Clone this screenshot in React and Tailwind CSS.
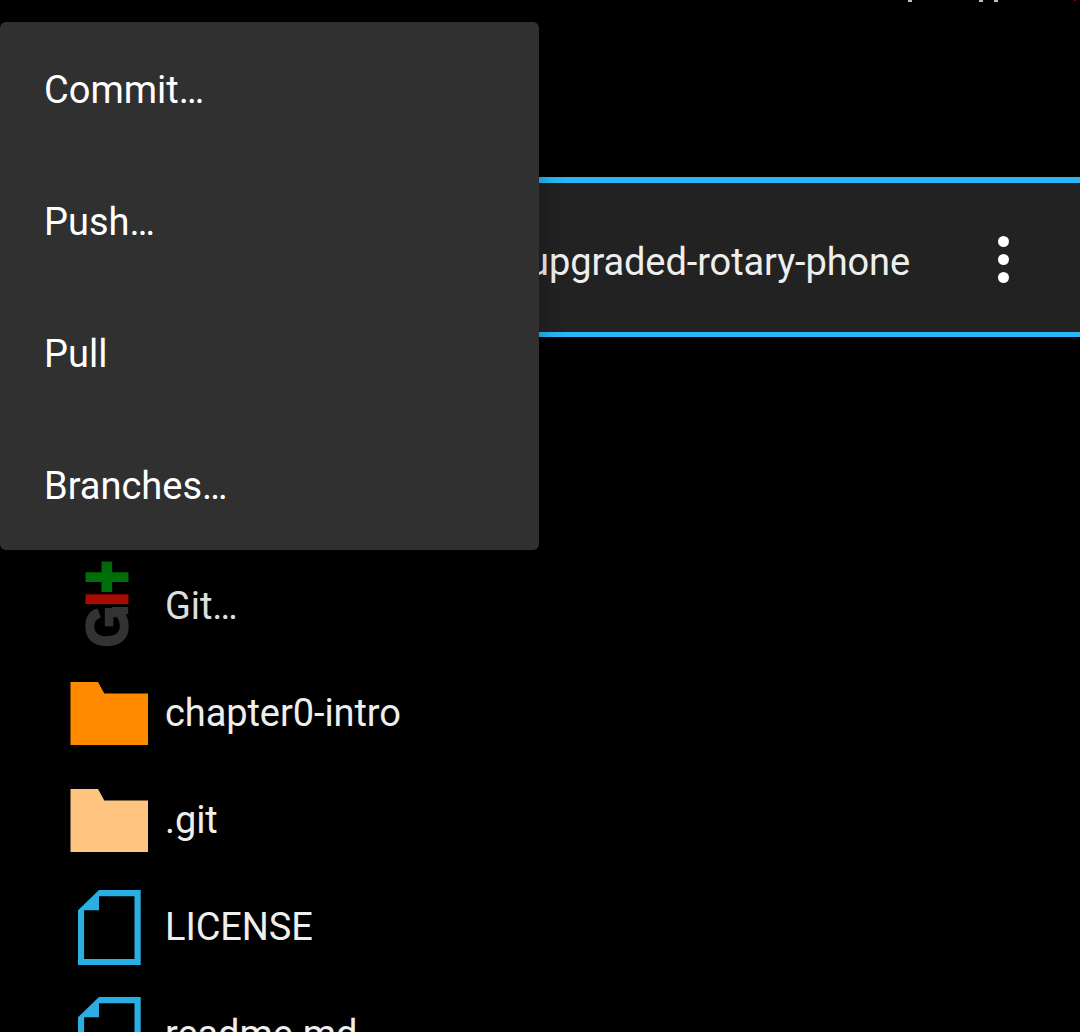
const menuItems = ["Commit…", "Push…", "Pull", "Branches…"];

function GitIcon() {
  return (
    <svg width="78" height="90" viewBox="70 559 78 90" className="block">
      <path d="M85.5 572.3H101.5V561.6H112.2V572.3H128.5V582H112.2V592H101.5V582H85.5Z" fill="#00700a" />
      <rect x="85.5" y="594.3" width="43" height="9.8" fill="#a80b00" />
      <text
        transform="translate(127.1 647.2) rotate(-90) scale(0.92 1)"
        fill="#333333"
        stroke="#333333"
        strokeWidth="2.4"
        fontFamily="Liberation Sans, Arial, sans-serif"
        fontWeight="700"
        fontSize="58"
      >
        G
      </text>
      <rect x="112" y="607" width="16.2" height="7" fill="#333333" />
    </svg>
  );
}

function FolderIcon({ color }) {
  return (
    <svg width="78" height="64" viewBox="0 0 78 64" className="mt-[7px] block">
      <path d="M.5 0H28L34.3 11.5H78V63H.5Z" fill={color} />
    </svg>
  );
}

function FileIcon() {
  return (
    <svg width="78" height="76" viewBox="0 0 78 76" className="mt-[7px] block">
      <path
        fillRule="evenodd"
        d="M29 .1H70.7V75.1H8V20.3ZM29 6.2V20.3H14.1V69H64.5V6.2Z"
        fill="#2bafe3"
      />
    </svg>
  );
}

const rows = [
  { name: "Git…", icon: <GitIcon />, tone: "text-[#dedede]" },
  { name: "chapter0-intro", icon: <FolderIcon color="#ff8a00" />, tone: "text-[#eeeeee]" },
  { name: ".git", icon: <FolderIcon color="#ffc480" />, tone: "text-[#eeeeee]" },
  { name: "LICENSE", icon: <FileIcon />, tone: "text-[#eeeeee]" },
  { name: "readme.md", icon: <FileIcon />, tone: "text-[#eeeeee]" },
];

export default function App() {
  return (
    <div className="relative flex h-[1032px] w-[1080px] flex-col overflow-hidden bg-black font-[Roboto,sans-serif] text-[38px] leading-[46px] text-[#eeeeee]">
      <div className="flex h-[177px] shrink-0 items-start pl-[908px]">
        <span className="h-[2px] w-[4px] bg-[#bdbdbd]" />
        <span className="ml-[67px] h-[2px] w-[4px] bg-[#bdbdbd]" />
        <span className="ml-[11px] h-[2px] w-[4px] bg-[#bdbdbd]" />
        <span className="ml-[76px] h-px w-[2px] bg-[#900000]" />
      </div>
      <header className="flex h-[160px] shrink-0 items-center justify-end border-t-[6px] border-b-[5px] border-[#29b6f6] bg-[#222222]">
        <span className="mt-[8px] tracking-[-0.1px] whitespace-nowrap">upgraded-rotary-phone</span>
        <span className="mt-[4px] mr-[71.5px] ml-[87.5px] flex flex-col gap-[7px]">
          <i className="size-[11px] rounded-full bg-white" />
          <i className="size-[11px] rounded-full bg-white" />
          <i className="size-[11px] rounded-full bg-white" />
        </span>
      </header>
      <main className="mt-[213px] flex flex-col">
        {rows.map((row) => (
          <div key={row.name} className="flex h-[107px] shrink-0 items-center pl-[70px]">
            <div className="w-[95px]">{row.icon}</div>
            <span className={`mt-[4px] tracking-[-0.08px] ${row.tone}`}>{row.name}</span>
          </div>
        ))}
      </main>
      <nav className="absolute top-[22px] left-0 flex h-[528px] w-[539px] flex-col rounded-[6px] bg-[#303030] text-white shadow-[0_8px_24px_rgba(0,0,0,0.3)]">
        {menuItems.map((item) => (
          <div key={item} className="flex h-[132px] items-center pt-[3px] pl-[44px]">
            {item}
          </div>
        ))}
      </nav>
    </div>
  );
}
